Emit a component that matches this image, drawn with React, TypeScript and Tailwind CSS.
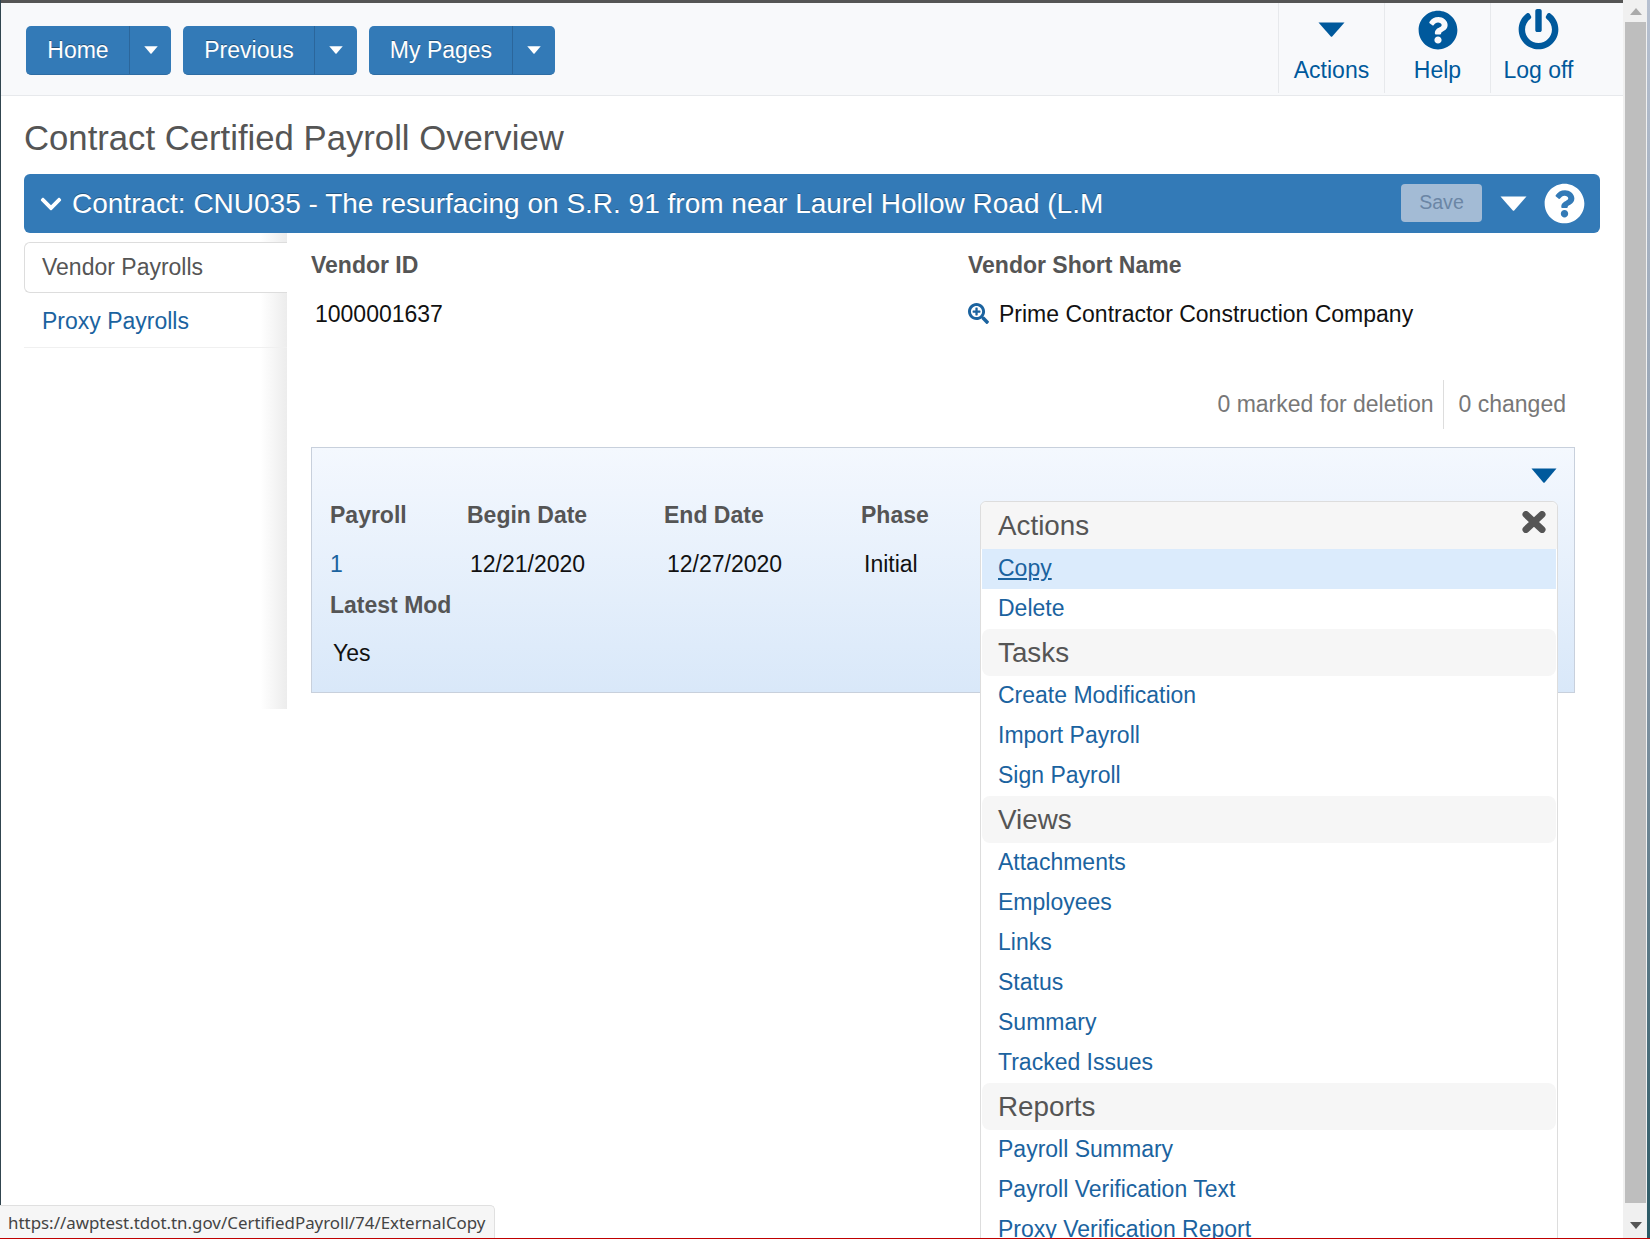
import React from "react";
import { FaQuestionCircle, FaPowerOff, FaSearchPlus, FaChevronDown } from "react-icons/fa";

function Caret({ w, h, color }: { w: number; h: number; color: string }) {
  return (
    <svg width={w} height={h} viewBox="0 0 27 15" preserveAspectRatio="none" className="block">
      <path d="M0.5 0.5H26.5L14.2 14.4Q13.5 15 12.8 14.4Z" fill={color} />
    </svg>
  );
}

function SplitButton({ label, labelW, caretW }: { label: string; labelW: string; caretW: string }) {
  return (
    <div className="flex h-[49px] rounded-[5px] border-b border-[#2e6da4] bg-[#337ab7] text-[23px] text-white [text-shadow:0_-1px_0_rgba(0,0,0,0.35)]">
      <div className={`flex items-center justify-center border-r border-[#2b669b] pl-[1px] pt-[1px] ${labelW}`}>{label}</div>
      <div className={`flex items-center justify-center ${caretW}`}>
        <Caret w={14} h={8} color="#fff" />
      </div>
    </div>
  );
}

function ToolItem({ icon, label, w }: { icon: React.ReactNode; label: string; w: string }) {
  return (
    <div className={`flex h-[90px] flex-col items-center border-l border-[#e7e9ec] text-[23px] text-[#00599c] ${w}`}>
      <div className="flex h-[53px] items-center justify-center">{icon}</div>
      <div className="mt-[1px] leading-[26px]">{label}</div>
    </div>
  );
}

function MenuHead({ label }: { label: string }) {
  return (
    <div className="mx-[1px] flex h-[47px] items-center rounded-[8px] bg-[#f6f6f6] px-[16px] text-[27.8px] text-[#555]">
      {label}
    </div>
  );
}

function MenuItem({ label, active }: { label: string; active?: boolean }) {
  return (
    <div className={`mx-[1px] flex h-[40px] items-center px-[16px] pb-[1px] text-[23px] text-[#1b639f] ${active ? "bg-[#dbebfc] underline" : ""}`}>
      {label}
    </div>
  );
}

const tasks = ["Create Modification", "Import Payroll", "Sign Payroll"];
const views = ["Attachments", "Employees", "Links", "Status", "Summary", "Tracked Issues"];
const reports = ["Payroll Summary", "Payroll Verification Text", "Proxy Verification Report"];

export default function App() {
  return (
    <div className="relative flex h-[1239px] w-[1650px] overflow-hidden bg-white [font-family:'Liberation_Sans',Arial,sans-serif]">
      <div className="w-[1px] shrink-0 bg-[#31454f]" />
      <div className="flex min-w-0 flex-1 flex-col">
        <div className="h-[3px] shrink-0 bg-[#555]" />
        {/* toolbar */}
        <div className="flex h-[93px] shrink-0 justify-between border-b border-[#e7e9ec] bg-[#f8f9fb]">
          <div className="flex gap-[12px] pl-[25px] pt-[23px]">
            <SplitButton label="Home" labelW="w-[104px]" caretW="w-[41px]" />
            <SplitButton label="Previous" labelW="w-[132px]" caretW="w-[42px]" />
            <SplitButton label="My Pages" labelW="w-[144px]" caretW="w-[42px]" />
          </div>
          <div className="flex pr-[37px]">
            <ToolItem w="w-[106px]" label="Actions" icon={<Caret w={27} h={15} color="#00599c" />} />
            <ToolItem w="w-[106px]" label="Help" icon={<FaQuestionCircle size={40} />} />
            <ToolItem w="w-[96px]" label="Log off" icon={<FaPowerOff size={41} />} />
          </div>
        </div>
        {/* title */}
        <h1 className="pl-[23px] pt-[22px] text-[34.7px] leading-[40px] text-[#555]">Contract Certified Payroll Overview</h1>
        {/* contract bar */}
        <div className="ml-[23px] mr-[23px] mt-[16px] flex h-[59px] shrink-0 items-center justify-between rounded-[6px] bg-[#337ab7] text-white">
          <div className="flex items-center pl-[15px] text-[28px] [text-shadow:0_-1px_0_rgba(0,0,0,0.3)]">
            <FaChevronDown size={24} className="mr-[9px]" />
            <span>Contract: CNU035 - The resurfacing on S.R. 91 from near Laurel Hollow Road (L.M</span>
          </div>
          <div className="flex items-center pr-[15px]">
            <div className="mb-[2px] flex h-[38px] w-[81px] items-center justify-center rounded-[4px] bg-[#a3bbd5] text-[19.6px] text-[#6b86a5]">Save</div>
            <div className="ml-[18px] mr-[17px]"><Caret w={27} h={15} color="#fff" /></div>
            <FaQuestionCircle size={41} />
          </div>
        </div>
        {/* body */}
        <div className="flex">
          {/* side nav */}
          <div className="ml-[23px] h-[476px] w-[263px] shrink-0 bg-[linear-gradient(to_right,#fff_90%,#ececec)] pt-[9px] text-[23px]">
            <div className="flex h-[51px] items-center rounded-l-[6px] border border-r-0 border-[#ddd] bg-white pl-[17px] text-[#555]">Vendor Payrolls</div>
            <div className="flex h-[55px] items-center border-b border-[#f0f0f0] pl-[18px] pt-[3px] text-[#1b639f]">Proxy Payrolls</div>
          </div>
          {/* content */}
          <div className="min-w-0 flex-1 pl-[24px] text-[23px]">
            <div className="flex pt-[17px]">
              <div className="w-[657px]">
                <div className="font-bold leading-[30px] text-[#555]">Vendor ID</div>
                <div className="mt-[19px] pl-[4px] leading-[30px] text-[#111]">1000001637</div>
              </div>
              <div>
                <div className="font-bold leading-[30px] text-[#555]">Vendor Short Name</div>
                <div className="mt-[19px] flex items-center leading-[30px] text-[#111]">
                  <FaSearchPlus size={21} className="mb-[2px] mr-[10px] text-[#1b639f]" />
                  Prime Contractor Construction Company
                </div>
              </div>
            </div>
            <div className="mr-[57px] mt-[51px] flex h-[49px] justify-end text-[#777]">
              <div className="flex items-center pr-[9px]">0 marked for deletion</div>
              <div className="flex items-center border-l border-[#ddd] pl-[15px]">0 changed</div>
            </div>
            {/* payroll card */}
            <div className="relative mr-[48px] mt-[18px] h-[246px] border border-[#c8d0dc] bg-linear-to-b from-[#f4f8fe] to-[#d9e8f9] pl-[18px]">
              <div className="absolute right-[17px] top-[20px]"><Caret w={26} h={15} color="#00599c" /></div>
              <div className="flex pt-[52px] font-bold leading-[30px] text-[#555]">
                <div className="w-[137px]">Payroll</div>
                <div className="w-[197px]">Begin Date</div>
                <div className="w-[197px]">End Date</div>
                <div>Phase</div>
              </div>
              <div className="mt-[19px] flex leading-[30px] text-[#111]">
                <div className="w-[137px] text-[#1b639f]">1</div>
                <div className="w-[197px] pl-[3px]">12/21/2020</div>
                <div className="w-[197px] pl-[3px]">12/27/2020</div>
                <div className="pl-[3px]">Initial</div>
              </div>
              <div className="mt-[11px] font-bold leading-[30px] text-[#555]">Latest Mod</div>
              <div className="mt-[18px] pl-[3px] leading-[30px] text-[#111]">Yes</div>
              {/* actions menu */}
              <div className="absolute left-[668px] top-[53px] w-[578px] rounded-t-[6px] border border-[#ddd] bg-white">
                <div className="relative flex h-[47px] items-center rounded-t-[6px] bg-[#f6f6f6] px-[17px] text-[27.8px] text-[#555]">
                  Actions
                  <svg width="24" height="22" viewBox="0 0 24 22" className="absolute right-[11px] top-[9px]">
                    <path d="M4 3.5L20 18.5M20 3.5L4 18.5" stroke="#555" strokeWidth="7" strokeLinecap="round" fill="none" />
                  </svg>
                </div>
                <MenuItem label="Copy" active />
                <MenuItem label="Delete" />
                <MenuHead label="Tasks" />
                {tasks.map((t) => <MenuItem key={t} label={t} />)}
                <MenuHead label="Views" />
                {views.map((t) => <MenuItem key={t} label={t} />)}
                <MenuHead label="Reports" />
                {reports.map((t) => <MenuItem key={t} label={t} />)}
              </div>
            </div>
          </div>
        </div>
      </div>
      {/* scrollbar */}
      <div className="flex w-[24px] shrink-0 flex-col items-center bg-[#f0f0f0] pl-[2px] pr-[1px]">
        <div className="flex h-[22px] items-center"><svg width="12" height="7" viewBox="0 0 12 7"><path d="M6 0L12 7H0Z" fill="#aaa" /></svg></div>
        <div className="h-[1181px] w-full shrink-0 bg-[#bebebe]" />
        <div className="flex h-[36px] items-center pb-[1px] pt-[10px]"><svg width="12" height="7" viewBox="0 0 12 7"><path d="M6 7L12 0H0Z" fill="#555" /></svg></div>
      </div>
      <div className="w-[3px] shrink-0 bg-linear-to-b from-[#b6c0d0] via-[#8c9bab] to-[#2b5a66]" />
      {/* status tooltip */}
      <div className="absolute bottom-0 left-0 flex h-[34px] w-[495px] items-center rounded-tr-[5px] border-r border-t border-[#e0e0e0] bg-[#f6f6f6] pl-[8px] text-[16.9px] text-[#444] [font-family:'Noto_Sans',sans-serif]">
        https://awptest.tdot.tn.gov/CertifiedPayroll/74/ExternalCopy
      </div>
      <div className="absolute bottom-0 left-0 h-[1px] w-full bg-[#c00000]" />
    </div>
  );
}
